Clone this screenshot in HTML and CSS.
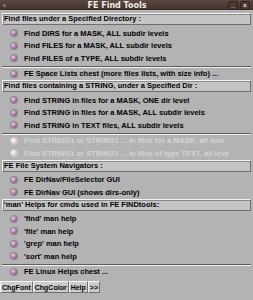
FILE: index.html
```html
<!DOCTYPE html>
<html>
  <head>
    <meta charset="UTF-8">
    <title>FE Find Tools</title>
    <link rel="stylesheet" href="styles.css">
  </head>
  <body>
    <div class="window">
      <div class="titlebar">
        <span class="wdot"></span>
        <span class="title">FE Find Tools</span>
        <span class="wbtns">
          <span class="wbtn">_</span>
          <span class="wbtn">x</span>
        </span>
      </div>

      <div class="content">
        <div class="hdr">Find files under a Specified Directory :</div>
        <div class="item"><span class="dot"></span>Find DIRS for a MASK, ALL subdir levels</div>
        <div class="item"><span class="dot"></span>Find FILES for a MASK, ALL subdir levels</div>
        <div class="item"><span class="dot"></span>Find FILES of a TYPE, ALL subdir levels</div>
        <div class="sep"></div>
        <div class="item"><span class="dot"></span>FE Space Lists chest (more files lists, with size info) ...</div>

        <div class="hdr">Find files containing a STRING, under a Specified Dir :</div>
        <div class="item"><span class="dot"></span>Find STRING in files for a MASK, ONE dir level</div>
        <div class="item"><span class="dot"></span>Find STRING in files for a MASK, ALL subdir levels</div>
        <div class="item"><span class="dot"></span>Find STRING in TEXT files, ALL subdir levels</div>
        <div class="sep"></div>
        <div class="item off"><span class="dot"></span>Find STRING1 or STRING2 ... in files for a MASK, all levs</div>
        <div class="item off"><span class="dot"></span>Find STRING1 or STRING2 ... in files of type TEXT, all levs</div>

        <div class="hdr">FE File System Navigators :</div>
        <div class="item"><span class="dot"></span>FE DirNav/FileSelector GUI</div>
        <div class="item"><span class="dot"></span>FE DirNav GUI (shows dirs-only)</div>

        <div class="hdr">'man' Helps for cmds used in FE FINDtools:</div>
        <div class="item"><span class="dot"></span>'find' man help</div>
        <div class="item"><span class="dot"></span>'file' man help</div>
        <div class="item"><span class="dot"></span>'grep' man help</div>
        <div class="item"><span class="dot"></span>'sort' man help</div>
        <div class="sep"></div>
        <div class="item"><span class="dot"></span>FE Linux Helps chest ...</div>

        <div class="buttons">
          <button>ChgFont</button>
          <button>ChgColor</button>
          <button>Help</button>
          <button>&gt;&gt;</button>
        </div>
      </div>
    </div>
  </body>
</html>
```

FILE: styles.css
```css
body {
  margin: 0;
  background-color: #b3b3b3;
  font-family: "Liberation Sans", Arial, sans-serif;
  font-weight: bold;
  font-size: 7.5px;
  color: #000;
}

.window {
  width: 253px;
  height: 300px;
  background-color: #b3b3b3;
  overflow: hidden;
}

.titlebar {
  height: 10px;
  display: flex;
  align-items: center;
  background: linear-gradient(#5c4a42, #3e2f29);
  color: #f0ece8;
  padding: 0 3px;
}

.wdot {
  width: 3px;
  height: 3px;
  border-radius: 50%;
  background-color: #8a7a72;
}

.title {
  flex: 1;
  text-align: center;
  font-family: "DejaVu Sans", sans-serif;
  font-size: 8px;
}

.wbtns {
  display: flex;
  gap: 2px;
}

.wbtn {
  width: 8px;
  height: 7px;
  font-size: 6px;
  line-height: 6px;
  text-align: center;
  border: 1px solid #2c201c;
  border-radius: 2px;
  background-color: #4a3a33;
}

.content {
  padding: 3px 2px 0 2px;
  display: flex;
  flex-direction: column;
}

/* section headers */
.hdr {
  height: 10px;
  line-height: 10px;
  padding-left: 1px;
  background-color: #c4c4c4;
  border: 1px solid #6e6e6e;
  border-left-color: #f4f4f4;
  border-top-color: #f4f4f4;
  box-shadow: inset 1px 1px 0 #8a8a8a;
  margin-bottom: 2px;
}

.item {
  height: 12.5px;
  display: flex;
  align-items: center;
  padding-left: 9px;
}

.item.off {
  color: #d4d4d4;
}

.dot {
  width: 6px;
  height: 6px;
  border-radius: 50%;
  margin-right: 7px;
  background: radial-gradient(circle at 35% 35%, #f0d8f0 0, #b478b4 45%, #6a3a6a 100%);
  box-shadow: 0 0 0 1px #8c8c8c;
}

.item.off .dot {
  background: radial-gradient(circle at 35% 35%, #ffffff 0, #e0cce0 60%, #c0b0c0 100%);
  box-shadow: 0 0 0 1px #c8c8c8;
}

.sep {
  height: 0;
  border-top: 1px solid #5e5e5e;
  border-bottom: 1px solid #f0f0f0;
  margin: 1px 0 0 0;
}

.buttons {
  display: flex;
  margin-top: 3px;
  margin-left: -2px;
}

button {
  font-family: inherit;
  font-weight: bold;
  font-size: 7px;
  padding: 1px 1px;
  height: 12px;
  background-color: #cccccc;
  border: 1px solid #6e6e6e;
  border-left-color: #f4f4f4;
  border-top-color: #f4f4f4;
  color: #000;
}
```
